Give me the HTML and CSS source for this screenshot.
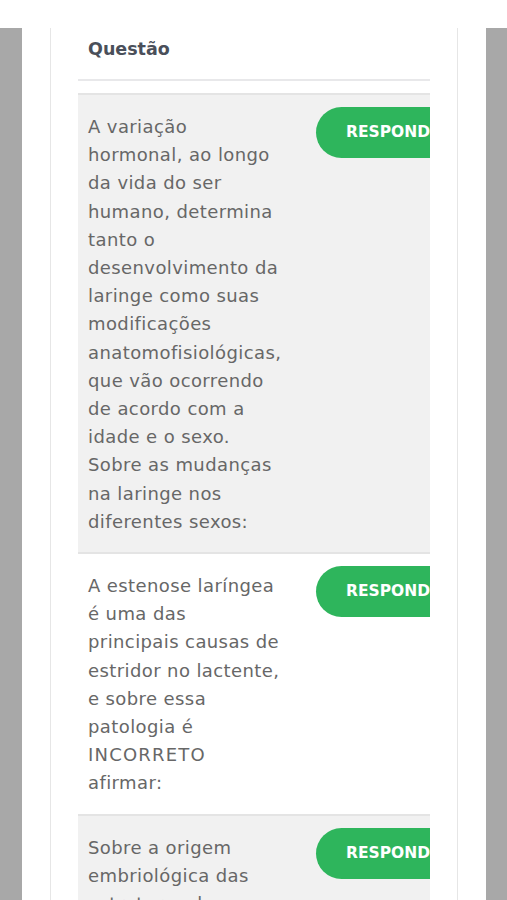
FILE: index.html
```html
<!DOCTYPE html>
<html>
    <head>
        <title>Questões</title>
        <link rel="stylesheet" href="styles.css">
    </head>
    <body>
        <div class="page">
            <div class="side"></div>
            <div class="card">
                <div class="list">
                    <div class="list-head">Questão</div>

                    <div class="qrow odd">
                        <div class="qtext">A variação hormonal, ao longo da vida do ser humano, determina tanto o desenvolvimento da laringe como suas modificações anatomofisiológicas, que vão ocorrendo de acordo com a idade e o sexo. Sobre as mudanças na laringe nos diferentes sexos:</div>
                        <div class="qaction"><a class="btn" href="#">RESPONDER</a></div>
                    </div>

                    <div class="qrow">
                        <div class="qtext">A estenose laríngea é uma das principais causas de estridor no lactente, e sobre essa patologia é <span class="caps">INCORRETO</span> afirmar:</div>
                        <div class="qaction"><a class="btn" href="#">RESPONDER</a></div>
                    </div>

                    <div class="qrow odd">
                        <div class="qtext">Sobre a origem embriológica das estruturas da laringe, é correto afirmar:</div>
                        <div class="qaction"><a class="btn" href="#">RESPONDER</a></div>
                    </div>
                </div>
            </div>
            <div class="side"></div>
        </div>
    </body>
</html>
```

FILE: styles.css
```css
html, body {
    margin: 0;
    background: #fff;
    height: 100%;
    overflow: hidden;
}

body {
    font-family: "DejaVu Sans", "Liberation Sans", sans-serif;
}

/* grey panels left and right, white card in the middle */
.page {
    display: flex;
    padding-top: 28px;
    height: 100%;
    box-sizing: border-box;
}

.side {
    width: 22px;
    background: #a8a8a8;
    flex-shrink: 0;
}

.page .side:last-child {
    width: 21px;
    margin-left: auto;
}

.card {
    width: 406px;
    margin: 0 28px;
    border-left: 1px solid #e6e6e6;
    border-right: 1px solid #e6e6e6;
    padding: 0 27px;
}

/* list of questions, cut off at the right edge like the original */
.list {
    width: 352px;
    overflow: hidden;
}

.list-head {
    padding: 7px 10px 16px;
    line-height: 28px;
    font-size: 17.5px;
    font-weight: 700;
    color: #4a4f5a;
    border-bottom: 2px solid #e8e8ea;
    margin-bottom: 12px;
}

.qrow {
    display: flex;
    align-items: flex-start;
    border-top: 2px solid #e4e4e4;
}

.qrow.odd {
    background: #f1f1f1;
}

.qtext {
    width: 194.2px;
    flex-shrink: 0;
    padding: 18px 11.8px 16px 10px;
    font-size: 18px;
    letter-spacing: 0.4px;
    line-height: 28.2px;
    color: #676767;
}

/* capitals run wider in the original face */
.caps {
    letter-spacing: 1.2px;
}

.qaction {
    padding: 12px 0 0 22px;
    flex-shrink: 0;
}

.btn {
    display: block;
    width: 170px;
    height: 51px;
    line-height: 51px;
    padding-left: 30px;
    border-radius: 26px;
    background: #2eb55c;
    color: #fff;
    font-weight: 700;
    font-size: 15.5px;
    text-decoration: none;
    white-space: nowrap;
}
```
